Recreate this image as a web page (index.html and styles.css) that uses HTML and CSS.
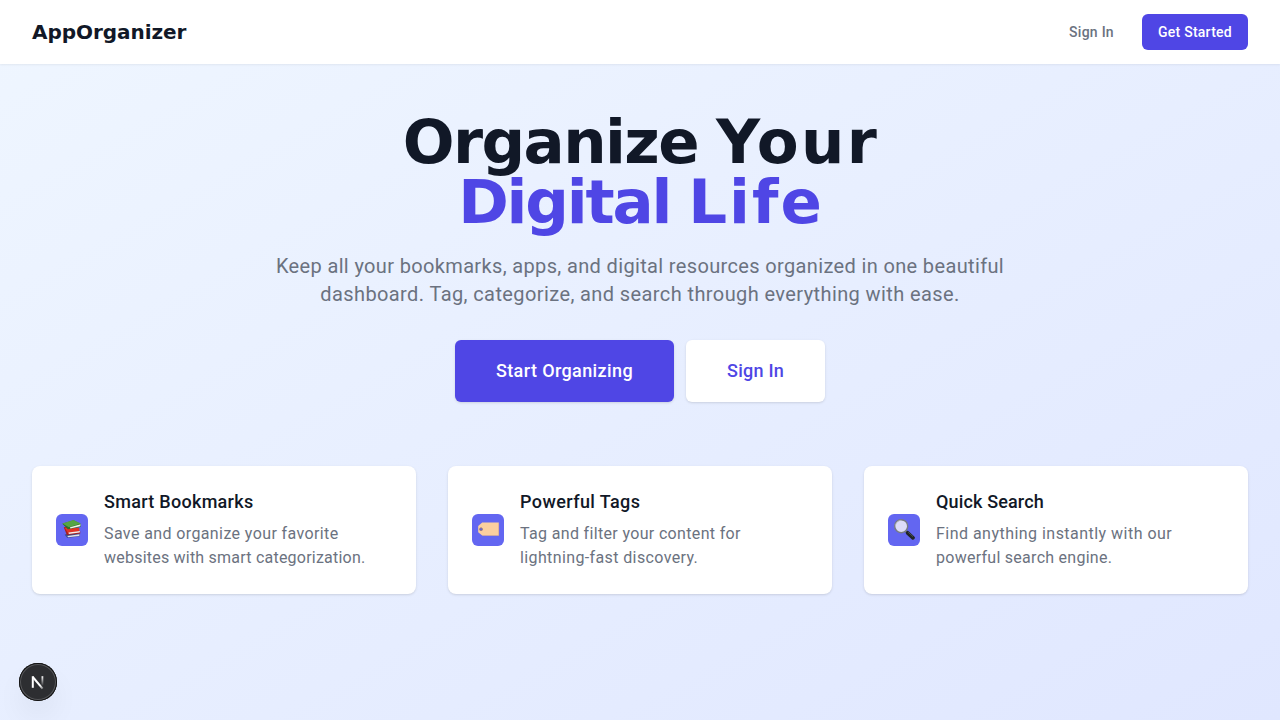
FILE: index.html
```html
<!DOCTYPE html>
<html lang="en">
<head>
<meta charset="utf-8">
<title>AppOrganizer</title>
<link rel="stylesheet" href="styles.css">
</head>
<body>
<nav class="nav">
  <div class="brand">AppOrganizer</div>
  <div class="nav-links"><a class="nav-signin">Sign In</a><a class="nav-cta">Get Started</a></div>
</nav>
<main class="main">
  <h1 class="title">
    <span class="title-line"><span class="w-organize">Organize</span><span class="w-your">Your</span></span>
    <span class="title-line accent"><span class="w-digital">Digital</span><span class="w-life">Life</span></span>
  </h1>
  <p class="lead">Keep all your bookmarks, apps, and digital resources organized in one beautiful<br><span class="lead-end">dashboard. Tag, categorize, and search through everything with ease.</span></p>
  <div class="actions"><a class="btn primary">Start Organizing</a><a class="btn secondary">Sign In</a></div>
  <div class="cards">
    <div class="card">
      <div class="icon">
        <svg viewBox="0 0 32 32">
          <g transform="translate(-1.2 .3) scale(1.04 1)">
          <path d="M9.5 20.5 L12 23.6 L24 22 L24.3 19.5 L14 18 Z" fill="#3d4f8f"/>
          <path d="M12.2 21.6 L23.8 20 L23.6 21.6 L12.6 22.9 Z" fill="#e4e2ea"/>
          <path d="M8.6 13 L11.6 20.6 L24.4 19.2 L24.4 17 L14 12 Z" fill="#a91f1b"/>
          <path d="M9.5 13.5 L12.6 18.6 L23.5 16.8 L23.5 13.5 Z" fill="#e23224"/>
          <path d="M13.2 18.2 L24.2 16.6 L24 18.2 L13.4 19.6 Z" fill="#f4eceb"/>
          <path d="M7.2 9.4 L12.6 15 L24.8 12.7 L25 9.8 L18 6 Z" fill="#2b6e2b"/>
          <path d="M7.2 9.2 L17.8 5.6 L25 9.3 L13.6 12.9 Z" fill="#55a544"/>
          <path d="M14.6 13 L24.9 9.9 L24.4 12 L15 14.2 Z" fill="#f1f3ed"/>
          </g>
        </svg>
      </div>
      <div><h3 class="h-books">Smart Bookmarks</h3><p><span class="b1">Save and organize your favorite</span><br><span class="b2">websites with smart categorization.</span></p></div>
    </div>
    <div class="card">
      <div class="icon">
        <svg viewBox="0 0 32 32">
          <path d="M10.2 8.4 H26.8 V21.6 H10.2 L6.2 18.2 V12 Z" fill="#fbcf9f"/>
          <circle cx="9" cy="15.2" r="1.5" fill="#6366d8" stroke="#a77e72" stroke-width=".7"/>
          <path d="M10.4 21.5 H26.6 V9" fill="none" stroke="#e4b283" stroke-width=".5"/>
        </svg>
      </div>
      <div><h3 class="h-tags">Powerful Tags</h3><p><span class="b3">Tag and filter your content for</span><br><span class="b4">lightning-fast discovery.</span></p></div>
    </div>
    <div class="card">
      <div class="icon">
        <svg viewBox="0 0 32 32">
          <path d="M17 16.5 L20 19.4" stroke="#8b8f91" stroke-width="2"/>
          <path d="M19.6 18.8 L25 23.8" stroke="#202427" stroke-width="3.8" stroke-linecap="round"/>
          <path d="M20.2 18.2 L25 22.6" stroke="#596065" stroke-width=".8"/>
          <circle cx="13.2" cy="12.2" r="6.5" fill="#dcdcf8" stroke="#777b82" stroke-width="1.4"/>
          <path d="M7.4 12.2 A5.8 5.8 0 0 1 13.2 6.3" fill="none" stroke="#b9bdc4" stroke-width=".8"/>
        </svg>
      </div>
      <div><h3 class="h-search">Quick Search</h3><p><span class="b5">Find anything instantly with our</span><br><span class="b6">powerful search engine.</span></p></div>
    </div>
  </div>
</main>
<div class="dev-badge">
  <svg viewBox="0 0 38 38">
    <defs>
      <linearGradient id="fadeDiagonal" x1="16" y1="16" x2="25" y2="26" gradientUnits="userSpaceOnUse"><stop offset=".6" stop-color="#fff"/><stop offset="1" stop-color="#fff" stop-opacity="0.25"/></linearGradient>
      <linearGradient id="fadeStem" x1="0" y1="13" x2="0" y2="23" gradientUnits="userSpaceOnUse"><stop stop-color="#fff"/><stop offset="1" stop-color="#fff" stop-opacity="0"/></linearGradient>
    </defs>
    <path d="M13.8 14 L23.6 25.6" fill="none" stroke="url(#fadeDiagonal)" stroke-width="2"/>
    <path d="M13.8 24.8 V13.2" stroke="#fff" stroke-width="2"/>
    <path d="M23.4 13.2 V22.5" stroke="url(#fadeStem)" stroke-width="1.8"/>
  </svg>
</div>
</body>
</html>
```
FILE: styles.css
```css
* { box-sizing: border-box; margin: 0; }
body {
  height: 720px;
  overflow: hidden;
  font-family: Roboto, sans-serif;
  background: linear-gradient(to bottom right, #eff6ff, #e0e7ff);
  color: #111827;
}
.nav {
  height: 64px;
  background: #fff;
  display: flex;
  justify-content: space-between;
  align-items: center;
  padding: 0 32px;
  box-shadow: 0 1px 2px rgba(0, 0, 0, .06);
}
.brand { font: 700 20px/28px "DejaVu Sans", sans-serif; letter-spacing: -.05px; }
.nav-links { display: flex; gap: 12px; font-size: 14px; line-height: 20px; font-weight: 500; letter-spacing: .26px; }
.nav-signin { padding: 8px 16px; color: #6b7280; }
.nav-cta { padding: 8px 16px; color: #fff; background: #4f46e5; border-radius: 6px; }

.main { padding: 48px 32px 0; }
.title { font: 700 61px/60px "DejaVu Sans", sans-serif; }
.title-line { display: flex; justify-content: center; }
.accent { color: #4f46e5; }
.w-organize { letter-spacing: -1.6px; margin-right: 18px; }
.w-your { letter-spacing: 2.3px; margin-right: -2px; }
.w-digital { letter-spacing: -2.2px; margin-right: 18px; }
.w-life { letter-spacing: 2px; margin-right: -2px; }

.lead { margin-top: 20px; font-size: 20px; line-height: 28px; letter-spacing: .355px; color: #6b7280; text-align: center; }
.lead-end { letter-spacing: .4px; }
.actions { display: flex; justify-content: center; gap: 12px; margin-top: 32px; }
.btn {
  padding: 17px 41px;
  font-size: 18px;
  line-height: 28px;
  font-weight: 500;
  border-radius: 6px;
  box-shadow: 0 1px 3px rgba(0, 0, 0, .1), 0 1px 2px -1px rgba(0, 0, 0, .1);
}
.primary { background: #4f46e5; color: #fff; letter-spacing: .39px; }
.secondary { background: #fff; color: #4f46e5; letter-spacing: .25px; }

.cards { display: grid; grid-template-columns: repeat(3, 1fr); gap: 32px; margin-top: 64px; }
.card {
  height: 128px;
  padding: 0 24px;
  background: #fff;
  border-radius: 8px;
  display: flex;
  align-items: center;
  gap: 16px;
  box-shadow: 0 1px 3px rgba(0, 0, 0, .1), 0 1px 2px -1px rgba(0, 0, 0, .1);
}
.icon { width: 32px; height: 32px; border-radius: 6px; background: #6366f1; }
.icon svg { display: block; width: 32px; height: 32px; }
.card h3 { font-size: 18px; line-height: 24px; font-weight: 500; }
.card p { font-size: 16px; line-height: 24px; color: #6b7280; margin-top: 8px; }
.h-books { letter-spacing: .29px; }
.h-tags { letter-spacing: .41px; }
.h-search { letter-spacing: .15px; }
.b1 { letter-spacing: .39px; }
.b2 { letter-spacing: .22px; }
.b3 { letter-spacing: .34px; }
.b4 { letter-spacing: .38px; }
.b5 { letter-spacing: .47px; }
.b6 { letter-spacing: .27px; }

.dev-badge {
  position: fixed;
  left: 19px;
  bottom: 19px;
  width: 38px;
  height: 38px;
  border-radius: 50%;
  background: #2d2e31;
  box-shadow: inset 0 0 0 1px #111, inset 0 0 0 2px #56575a, 0 16px 32px -8px rgba(0, 0, 0, .14);
}
.dev-badge svg { display: block; width: 38px; height: 38px; }
```
